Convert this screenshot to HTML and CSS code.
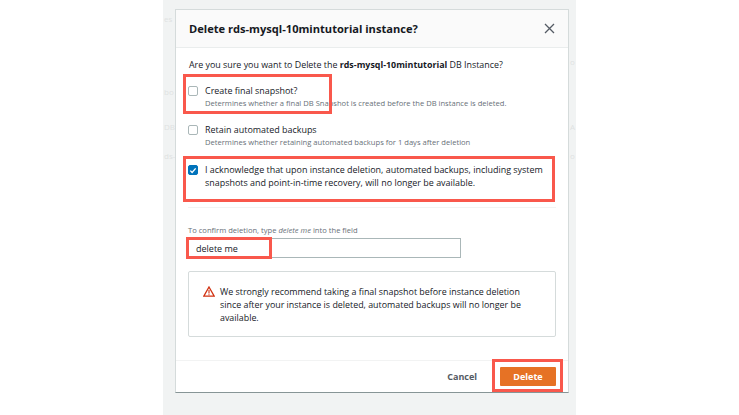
FILE: index.html
```html
<!doctype html>
<html lang="en">
<head>

<meta charset="utf-8">

<title>Delete instance</title>

<link rel="stylesheet" href="styles.css">

</head>
<body>

<div class="backdrop">
	<span class="ghost ghost--1">es</span>
	<span class="ghost ghost--2">bo</span>
	<span class="ghost ghost--3">DB i</span>
	<span class="ghost ghost--4">ds-</span>
	<span class="ghost ghost--5">o</span>
	<span class="ghost ghost--6">A</span>
	<span class="ghost ghost--7">o</span>

	<div class="dialog">
		<div class="dialog-head">
			<h2>Delete rds-mysql-10mintutorial instance?</h2>
			<svg class="close" width="11" height="11" viewBox="0 0 11 11"><path d="M1 1l9 9M10 1l-9 9" fill="none" stroke="#545b64" stroke-width="1.3"/></svg>
		</div>

		<div class="dialog-body">
			<p class="intro">Are you sure you want to Delete the <b>rds-mysql-10mintutorial</b> DB Instance?</p>

			<div class="option option--first">
				<span class="check"></span>
				<div>
					<div class="option-label">Create final snapshot?</div>
					<div class="option-hint">Determines whether a final DB Snapshot is created before the DB instance is deleted.</div>
				</div>
			</div>

			<div class="option option--second">
				<span class="check"></span>
				<div>
					<div class="option-label">Retain automated backups</div>
					<div class="option-hint">Determines whether retaining automated backups for 1 days after deletion</div>
				</div>
			</div>

			<div class="option option--third">
				<span class="check check--on">
					<svg width="9" height="9" viewBox="0 0 9 9"><path d="M1.5 4.6l2 2.1 4-4.6" fill="none" stroke="#fff" stroke-width="1.5"/></svg>
				</span>
				<div class="option-label option-label--long">I acknowledge that upon instance deletion, automated backups, including system snapshots and point-in-time recovery, will no longer be available.</div>
			</div>

			<div class="divider"></div>

			<div class="confirm-label">To confirm deletion, type <i>delete me</i> into the field</div>
			<div class="confirm-input">delete me</div>

			<div class="warning">
				<svg class="warning-icon" width="12" height="11" viewBox="0 0 12 11"><path d="M6 1L11.2 10.2H.8z" fill="none" stroke="#d13212" stroke-width="1.3"/><path d="M6 4v3.4M6 8.2v1.1" fill="none" stroke="#d13212" stroke-width="1.1"/></svg>
				<p>We strongly recommend taking a final snapshot before instance deletion since after your instance is deleted, automated backups will no longer be available.</p>
			</div>
		</div>

		<div class="dialog-foot">
			<span class="cancel">Cancel</span>
			<span class="delete">Delete</span>
		</div>
	</div>
</div>

<div class="callout callout--snapshot"></div>
<div class="callout callout--ack"></div>
<div class="callout callout--input"></div>
<div class="callout callout--delete"></div>

</body>
</html>
```

FILE: styles.css
```css
html, body {
	height: 100%;
}

body {
	position: relative;
	margin: 0;
	overflow: hidden;
	background: #fff;
	font-family: "Open Sans", sans-serif;
	color: #16191f;
}

.backdrop {
	position: relative;
	box-sizing: border-box;
	width: 413px;
	height: 415px;
	margin-left: 163px;
	padding: 9px 7px 0 12px;
	background: #f1f3f3;
}

.ghost {
	position: absolute;
	font-size: 8px;
	color: #dfe2e2;
}
.ghost--1 { left: 1px; top: 13px; }
.ghost--2 { left: 1px; top: 86px; }
.ghost--3 { left: 1px; top: 121px; }
.ghost--4 { left: 1px; top: 150px; }
.ghost--5 { left: 407px; top: 56px; }
.ghost--6 { left: 407px; top: 121px; }
.ghost--7 { left: 407px; top: 150px; }

.dialog {
	position: relative;
	box-sizing: border-box;
	height: 384px;
	background: #fff;
	border: 1px solid #d5dbdb;
	border-bottom-color: #879596;
}

.dialog-head {
	display: flex;
	align-items: center;
	justify-content: space-between;
	box-sizing: border-box;
	height: 38px;
	padding: 0 13px;
	background: #fafafa;
	border-bottom: 1px solid #eaeded;
}

h2 {
	margin: 0;
	font-size: 11.1px;
	font-weight: 700;
}

.dialog-body {
	height: 312px;
	padding: 0 12px 0 13px;
}

.intro {
	margin: 0;
	padding-top: 10px;
	font-size: 8.9px;
	line-height: 13px;
}

.option {
	display: flex;
	gap: 7px;
	margin-left: -1px;
}
.option--first { margin-top: 13px; }
.option--second { margin-top: 15px; }
.option--third { margin-top: 16px; }

.check {
	flex: none;
	box-sizing: border-box;
	width: 10px;
	height: 10px;
	margin-top: 2px;
	background: #fff;
	border: 1px solid #aab7b8;
	border-radius: 2px;
}
.check--on {
	display: flex;
	align-items: center;
	justify-content: center;
	background: #0073bb;
	border-color: #0073bb;
}

.option-label {
	font-size: 8.95px;
	line-height: 13px;
}
.option-label--long {
	width: 350px;
}

.option-hint {
	margin-top: 1px;
	font-size: 7.6px;
	line-height: 10px;
	color: #687078;
}

.divider {
	height: 1px;
	margin: 18px 0 0 -1px;
	background: #f2f3f3;
}

.confirm-label {
	margin: 17px 0 0 -1px;
	font-size: 7.6px;
	line-height: 10px;
	color: #687078;
}

.confirm-input {
	box-sizing: border-box;
	width: 273px;
	height: 20px;
	margin: 3px 0 0 -1px;
	padding-left: 7px;
	border: 1px solid #aab7b8;
	font-size: 9px;
	line-height: 20px;
}

.warning {
	display: flex;
	gap: 5px;
	box-sizing: border-box;
	height: 66px;
	margin: 13px 0 0 -1px;
	padding: 13px 25px 0 14px;
	border: 1px solid #d5dbdb;
	border-radius: 2px;
}
.warning p {
	margin: 0;
	font-size: 8.9px;
	line-height: 13px;
}
.warning-icon {
	flex: none;
	margin-top: 1px;
}

.dialog-foot {
	display: flex;
	align-items: center;
	justify-content: flex-end;
	box-sizing: border-box;
	height: 32px;
	padding: 0 12px 0 0;
	border-top: 1px solid #f2f3f3;
	gap: 23px;
	font-size: 9px;
	font-weight: 700;
}

.cancel {
	color: #545b64;
}

.delete {
	box-sizing: border-box;
	width: 56px;
	height: 19px;
	background: #e67225;
	border-radius: 1px;
	color: #fff;
	line-height: 19px;
	text-align: center;
}

/* red boxes drawn over the screenshot */
.callout {
	position: absolute;
	box-sizing: border-box;
	border: 3px solid #f9584c;
}
.callout--snapshot { left: 183px; top: 74px; width: 149px; height: 40px; }
.callout--ack { left: 183px; top: 156px; width: 372px; height: 46px; }
.callout--input { left: 186px; top: 237px; width: 86px; height: 22px; }
.callout--delete { left: 492px; top: 359px; width: 71px; height: 33px; }
```
